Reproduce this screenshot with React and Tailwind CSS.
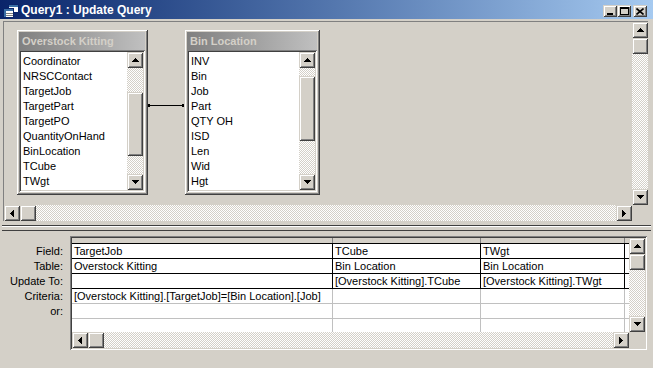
import React from "react";

const raised =
  "bg-[#d4d0c8] shadow-[inset_1px_1px_0_#d4d0c8,inset_-1px_-1px_0_#404040,inset_2px_2px_0_#ffffff,inset_-2px_-2px_0_#808080]";
const sunken =
  "shadow-[inset_1px_1px_0_#808080,inset_-1px_-1px_0_#ffffff,inset_2px_2px_0_#404040,inset_-2px_-2px_0_#d4d0c8]";
const checker =
  "[background:repeating-conic-gradient(#d4d0c8_0%_25%,#ffffff_0%_50%)_0_0/2px_2px]";

function Arrow({ dir }) {
  const rects = {
    up: [[3, 0, 1, 1], [2, 1, 3, 1], [1, 2, 5, 1], [0, 3, 7, 1]],
    down: [[0, 0, 7, 1], [1, 1, 5, 1], [2, 2, 3, 1], [3, 3, 1, 1]],
    left: [[0, 3, 1, 1], [1, 2, 1, 3], [2, 1, 1, 5], [3, 0, 1, 7]],
    right: [[0, 0, 1, 7], [1, 1, 1, 5], [2, 2, 1, 3], [3, 3, 1, 1]],
  }[dir];
  const vertical = dir === "up" || dir === "down";
  return (
    <svg width={vertical ? 7 : 4} height={vertical ? 4 : 7} shapeRendering="crispEdges">
      {rects.map(([x, y, w, h], i) => (
        <rect key={i} x={x} y={y} width={w} height={h} fill="#000" />
      ))}
    </svg>
  );
}

function ScrollButton({ dir }) {
  return (
    <div className={`w-[16px] h-[16px] shrink-0 flex items-center justify-center ${raised}`}>
      <Arrow dir={dir} />
    </div>
  );
}

function VScroll({ before = "h-0", thumb = "h-[16px]" }) {
  return (
    <div className="w-[16px] shrink-0 flex flex-col">
      <ScrollButton dir="up" />
      <div className={`${before} shrink-0 ${checker}`} />
      <div className={`${thumb} shrink-0 ${raised}`} />
      <div className={`flex-1 ${checker}`} />
      <ScrollButton dir="down" />
    </div>
  );
}

function HScroll() {
  return (
    <div className="flex-1 h-[16px] flex">
      <ScrollButton dir="left" />
      <div className={`w-[16px] shrink-0 ${raised}`} />
      <div className={`flex-1 ${checker}`} />
      <ScrollButton dir="right" />
    </div>
  );
}

function TableWindow({ title, fields, className, before, thumb }) {
  return (
    <div className={`absolute top-[7px] h-[166px] p-[3px] flex flex-col ${raised} ${className}`}>
      <div className="h-[18px] shrink-0 bg-linear-to-r from-[#808080] to-[#c0c0c0] text-[#d4d0c8] font-bold pl-[3px] leading-[18px] whitespace-nowrap overflow-hidden">
        {title}
      </div>
      <div className={`flex-1 p-[2px] flex min-h-0 ${sunken}`}>
        <div className="flex-1 bg-white pt-[2px] pl-[2px] overflow-hidden">
          {fields.map((f) => (
            <div key={f} className="h-[15px] leading-[15px] whitespace-nowrap">
              {f}
            </div>
          ))}
        </div>
        <VScroll before={before} thumb={thumb} />
      </div>
    </div>
  );
}

const cols = ["w-[261px]", "w-[148px]", "w-[144px]", "flex-1"];

const rows = [
  { cells: ["TargetJob", "TCube", "TWgt", ""], dark: true },
  { cells: ["Overstock Kitting", "Bin Location", "Bin Location", ""], dark: true },
  { cells: ["", "[Overstock Kitting].TCube", "[Overstock Kitting].TWgt", ""], dark: true },
  { cells: ["[Overstock Kitting].[TargetJob]=[Bin Location].[Job]", "", "", ""], dark: false },
  { cells: ["", "", "", ""], dark: false },
];

const labels = ["Field:", "Table:", "Update To:", "Criteria:", "or:"];

function QueryIcon() {
  return (
    <svg width="16" height="14" viewBox="0 0 16 14" shapeRendering="crispEdges">
      <rect x="5.5" y="0.5" width="10" height="8" fill="#fff" stroke="#0a246a" />
      <rect x="6" y="1" width="9" height="2" fill="#3a6ea5" />
      <rect x="0.5" y="4.5" width="10" height="9" fill="#fff" stroke="#0a246a" />
      <rect x="1" y="5" width="9" height="2" fill="#3a6ea5" />
      <rect x="1" y="7" width="2" height="6" fill="#3a6ea5" />
      <rect x="3" y="9" width="7" height="1" fill="#808080" />
      <rect x="3" y="11" width="7" height="1" fill="#808080" />
    </svg>
  );
}

function CaptionButton({ children, className = "" }) {
  return (
    <div className={`w-[14px] h-[12px] flex items-center justify-center ${raised} ${className}`}>
      {children}
    </div>
  );
}

export default function App() {
  return (
    <div className="w-[653px] h-[368px] bg-[#d4d0c8] overflow-hidden flex flex-col [font-family:'Liberation_Sans',Arial,sans-serif] text-[11px] text-black">
      {/* Title bar */}
      <div className="h-[19px] shrink-0 flex items-start bg-linear-to-r from-[#0a246a] to-[#a6caf0]">
        <div className="ml-[3px] mt-[4px]">
          <QueryIcon />
        </div>
        <div className="ml-[2px] pt-[2px] leading-[17px] text-[12px] text-white font-bold whitespace-nowrap">
          Query1 : Update Query
        </div>
        <div className="ml-auto mr-[6px] mt-[5px] flex">
          <CaptionButton>
            <svg width="6" height="8" shapeRendering="crispEdges">
              <rect x="0" y="6" width="6" height="2" fill="#000" />
            </svg>
          </CaptionButton>
          <CaptionButton>
            <svg width="9" height="8" shapeRendering="crispEdges">
              <rect x="0.5" y="0.5" width="8" height="7" fill="none" stroke="#000" />
              <rect x="0" y="1" width="9" height="1" fill="#000" />
            </svg>
          </CaptionButton>
          <CaptionButton className="ml-[2px]">
            <svg width="8" height="7" viewBox="0 0 8 7">
              <path d="M0.5 0.5 L7.5 6.5 M7.5 0.5 L0.5 6.5" stroke="#000" strokeWidth="1.6" />
            </svg>
          </CaptionButton>
        </div>
      </div>

      {/* Upper pane: table diagram */}
      <div className="mt-[2px] ml-[3px] w-[645px] h-[200px] shrink-0 border-l border-t border-[#808080] flex flex-col">
        <div className="flex h-[183px]">
          <div className="relative flex-1">
            <TableWindow
              title="Overstock Kitting"
              className="left-[12px] w-[132px]"
              before="h-[24px]"
              thumb="h-[64px]"
              fields={[
                "Coordinator",
                "NRSCContact",
                "TargetJob",
                "TargetPart",
                "TargetPO",
                "QuantityOnHand",
                "BinLocation",
                "TCube",
                "TWgt",
              ]}
            />
            <TableWindow
              title="Bin Location"
              className="left-[180px] w-[136px]"
              before="h-[8px]"
              thumb="h-[65px]"
              fields={["INV", "Bin", "Job", "Part", "QTY OH", "ISD", "Len", "Wid", "Hgt"]}
            />
            {/* join line */}
            <div className="absolute left-[144px] top-[82px] w-[36px] h-[3px] flex items-center">
              <div className="w-[2px] h-[3px] bg-black" />
              <div className="flex-1 h-[1px] bg-black" />
              <div className="w-[2px] h-[3px] bg-black" />
            </div>
          </div>
          <VScroll />
        </div>
        <div className="flex h-[16px]">
          <HScroll />
          <div className="w-[16px]" />
        </div>
      </div>

      {/* Splitter */}
      <div className="mt-[4px] mx-[2px] h-[6px] shrink-0 border-y border-[#404040] bg-[#d4d0c8] shadow-[inset_0_1px_0_#ffffff]" />

      {/* Lower pane: design grid */}
      <div className="flex mt-[5px]">
        <div className="w-[70px] shrink-0 pt-[8px] pr-[7px] text-right">
          {labels.map((l) => (
            <div key={l} className="h-[15px] leading-[14px] whitespace-nowrap">
              {l}
            </div>
          ))}
        </div>
        <div className={`w-[577px] h-[114px] p-[2px] flex flex-col ${sunken}`}>
          <div className="flex flex-1 min-h-0">
            <div className="flex-1 bg-white flex flex-col overflow-hidden">
              <div className="h-[6px] shrink-0 flex border-b border-black bg-[#d4d0c8]">
                {cols.map((c, i) => (
                  <div key={i} className={`${c} h-full ${i < 3 ? "border-r border-[#808080]" : ""}`} />
                ))}
              </div>
              {rows.map((r, ri) => (
                <div
                  key={ri}
                  className={`h-[15px] shrink-0 flex border-b ${r.dark ? "border-black" : "border-[#c0c0c0]"}`}
                >
                  {r.cells.map((t, i) => (
                    <div
                      key={i}
                      className={`${cols[i]} h-full px-[2px] leading-[14px] whitespace-nowrap overflow-hidden ${
                        i < 3 ? (r.dark ? "border-r border-black" : "border-r border-[#c0c0c0]") : ""
                      }`}
                    >
                      {t}
                    </div>
                  ))}
                </div>
              ))}
              <div className="flex-1 flex">
                {cols.map((c, i) => (
                  <div key={i} className={`${c} h-full ${i < 3 ? "border-r border-[#c0c0c0]" : ""}`} />
                ))}
              </div>
            </div>
            <VScroll />
          </div>
          <div className="flex h-[16px] shrink-0">
            <HScroll />
            <div className="w-[16px] bg-[#d4d0c8]" />
          </div>
        </div>
      </div>
    </div>
  );
}
